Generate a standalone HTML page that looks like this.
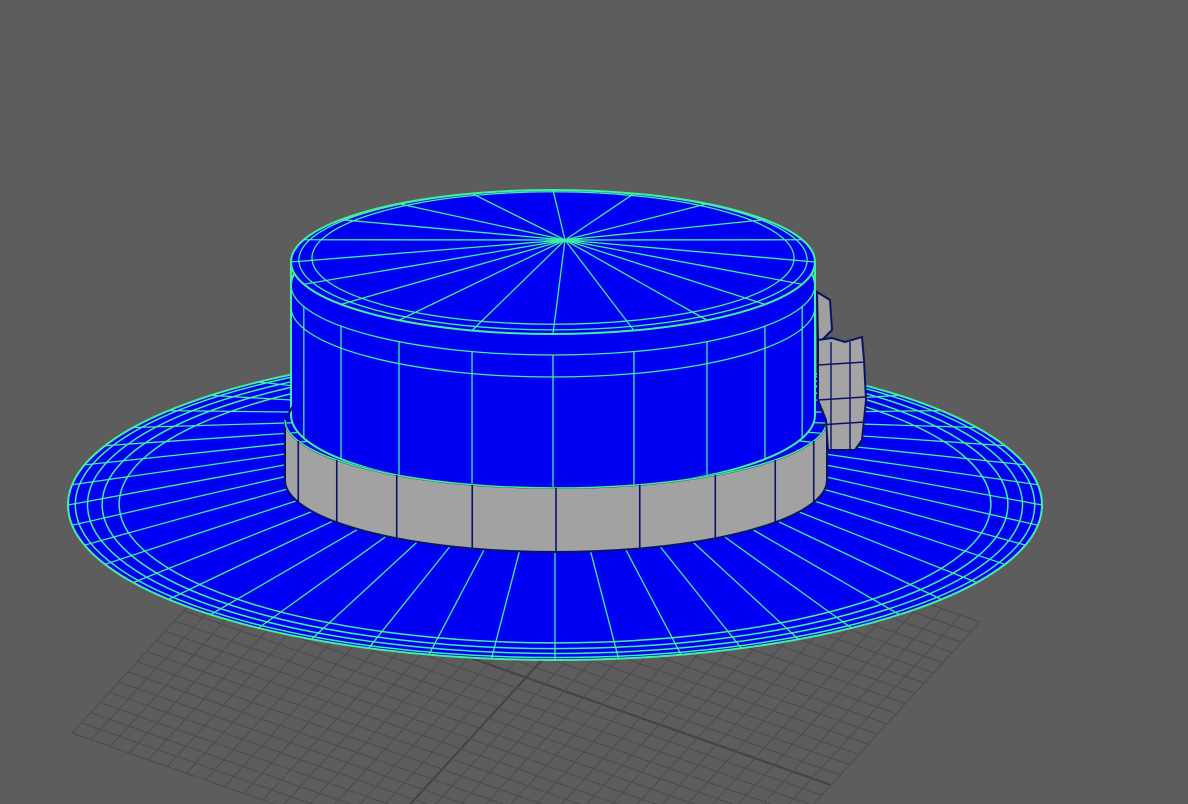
<!DOCTYPE html>
<html><head><meta charset="utf-8"><style>
html,body{margin:0;padding:0;background:#5d5d5d;width:1188px;height:804px;overflow:hidden}
svg{display:block;overflow:hidden}
</style></head><body>
<svg id="s" width="1188" height="804" viewBox="0 0 1188 804" xmlns="http://www.w3.org/2000/svg">
<defs><clipPath id="c"><rect width="1188" height="804"/></clipPath></defs>
<rect width="1188" height="804" fill="#5d5d5d"/>
<g id="grid" stroke="#4e4e4e" stroke-width="1.2" fill="none" clip-path="url(#c)"></g>
<g id="brim"></g>
<g id="crown"></g>
<g id="band"></g>
<g id="bow"></g>
<g id="cap"></g>
</svg>
<script>
const NS="http://www.w3.org/2000/svg";
function el(p,t,a){const e=document.createElementNS(NS,t);for(const k in a)e.setAttribute(k,a[k]);document.getElementById(p).appendChild(e);return e;}
const G="#40f0a0",B="#0000f4",D="#0a1466";
const L=[72,733],R=[980,622],F=[682,948],K=[370,407];
function bil(u,v){
 const x=(1-u)*(1-v)*K[0]+u*(1-v)*L[0]+(1-u)*v*R[0]+u*v*F[0];
 const y=(1-u)*(1-v)*K[1]+u*(1-v)*L[1]+(1-u)*v*R[1]+u*v*F[1];return [x,y];}
const N=32;
for(let i=0;i<=N;i++){const t=i/N;let a=bil(t,0),b=bil(t,1);
 el("grid","line",{x1:a[0],y1:a[1],x2:b[0],y2:b[1],"stroke":i==N/2?"#444":"#4e4e4e","stroke-width":i==N/2?2.2:1.2});
 a=bil(0,t);b=bil(1,t);
 el("grid","line",{x1:a[0],y1:a[1],x2:b[0],y2:b[1],"stroke":i==N/2?"#444":"#4e4e4e","stroke-width":i==N/2?2.2:1.2});}
const bc=[555,505],brx=487,bry=155;
el("brim","ellipse",{cx:bc[0],cy:bc[1],rx:brx,ry:bry,fill:B,stroke:G,"stroke-width":2});
[0.985,0.96,0.93,0.895].forEach(s=>el("brim","ellipse",{cx:bc[0],cy:bc[1]-(1-s)*8,rx:brx*s,ry:bry*s,fill:"none",stroke:G,"stroke-width":1.5}));
for(let i=0;i<48;i++){const a=i/48*2*Math.PI;
 el("brim","line",{x1:bc[0]+brx*0.5*Math.cos(a),y1:bc[1]-45+bry*0.5*Math.sin(a),x2:bc[0]+brx*Math.cos(a),y2:bc[1]+bry*Math.sin(a),stroke:G,"stroke-width":1.3});}
const cx=553,crx=262,topY=285,topRy=70,botY=415,botRy=75;
let d=`M${cx-crx},${topY} L${cx-crx},${botY} A${crx},${botRy} 0 0 0 ${cx+crx},${botY} L${cx+crx},${topY} A${crx},${topRy} 0 0 0 ${cx-crx},${topY}Z`;
el("crown","path",{d:d,fill:B,stroke:G,"stroke-width":2});
for(let i=1;i<10;i++){const a=Math.PI*i/10;const x=cx-crx*Math.cos(a);
 el("crown","line",{x1:x,y1:topY+topRy*Math.sin(a),x2:x,y2:botY+botRy*Math.sin(a),stroke:G,"stroke-width":1.3});}
[0,22].forEach(o=>el("crown","path",{d:`M${cx-crx},${topY+o} A${crx},${topRy} 0 0 0 ${cx+crx},${topY+o}`,fill:"none",stroke:G,"stroke-width":1.3}));
const bx=556,bbr=271,bt=420,btr=68,bb=480,bbr2=72;
el("band","path",{d:`M${bx-bbr},${bt} A${bbr},${btr} 0 0 0 ${bx+bbr},${bt} L${bx+bbr},${bb} A${bbr},${bbr2} 0 0 1 ${bx-bbr},${bb}Z`,fill:"#a2a2a2",stroke:D,"stroke-width":2});
el("band","path",{d:`M${bx-bbr},${bt} A${bbr},${btr} 0 0 0 ${bx+bbr},${bt}`,fill:"none",stroke:G,"stroke-width":1.5});
el("band","path",{d:`M${bx-bbr+8},${bt-14} L${bx-bbr},${bt} M${bx+bbr-8},${bt-14} L${bx+bbr},${bt}`,stroke:D,"stroke-width":2});
for(let i=1;i<10;i++){const a=Math.PI*i/10;const x=bx-bbr*Math.cos(a);
 el("band","line",{x1:x,y1:bt+btr*Math.sin(a),x2:x,y2:bb+bbr2*Math.sin(a),stroke:D,"stroke-width":1.6});}
el("bow","path",{d:"M817,292 L830,300 L832,330 L822,340 L818,340Z",fill:"#a0a0a0",stroke:D,"stroke-width":2});
el("bow","path",{d:"M818,340 L832,338 L845,342 L862,337 L864,360 L866,400 L862,440 L855,450 L828,450 L826,420 L818,400Z",fill:"#a4a4a4",stroke:D,"stroke-width":2});
[365,400,425].forEach(y=>el("bow","line",{x1:818,y1:y,x2:865,y2:y-3,stroke:D,"stroke-width":1.4}));
[831,850].forEach(x=>el("bow","line",{x1:x,y1:342,x2:x,y2:450,stroke:D,"stroke-width":1.4}));
const ccx=553,ccy=262,crr=262,cry=72,px=565,py=240;
el("cap","ellipse",{cx:ccx,cy:ccy,rx:crr,ry:cry,fill:B,stroke:G,"stroke-width":2});
[0.97,0.92].forEach((s,k)=>el("cap","ellipse",{cx:ccx,cy:ccy-2-k*2,rx:crr*s,ry:cry*s,fill:"none",stroke:G,"stroke-width":1.3}));
for(let i=0;i<20;i++){const a=i/20*2*Math.PI;
 el("cap","line",{x1:px,y1:py,x2:ccx+crr*Math.cos(a),y2:ccy+cry*Math.sin(a),stroke:G,"stroke-width":1.3});}
el("cap","path",{d:`M${cx-crx},${ccy} L${cx-crx},${topY}`,stroke:G,"stroke-width":2});
el("cap","path",{d:`M${cx+crx},${ccy} L${cx+crx},${topY}`,stroke:G,"stroke-width":2});
</script>
</body></html>
